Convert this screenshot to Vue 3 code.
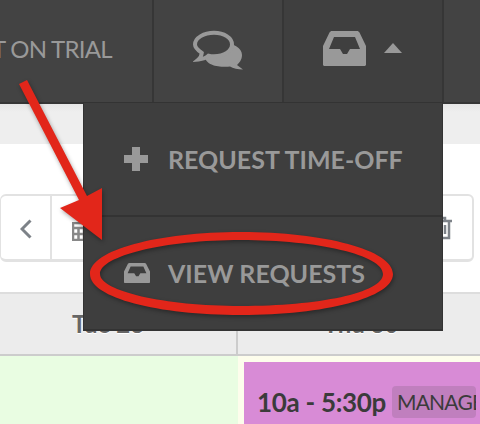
<script setup>
const inboxPath = 'M9 0h25c1 0 2 .6 2.500 1.500L43 15v18.500c0 .8-.7 1.500-1.500 1.500h-40C.7 35 0 34.300 0 33.500V15L6.500 1.500C7 .6 8 0 9 0zM11 6 6 18h11l3 5h4l3-5h10L32 6z'
</script>

<template>
  <div class="page">
    <header class="topbar">
      <div class="cell trial"><span class="trial-label">T ON TRIAL</span></div>
      <div class="cell chat">
        <svg width="52" height="40" viewBox="0 0 52 40">
          <path fill="#999" d="M12 26c0-7 7-13 18-13s19 5 19 12c0 5-3 8-5 10l6 4.500c-5 0-10-1-13-3-8 1-25 0-25-10.500z" />
          <path fill="#434343" stroke="#999" stroke-width="4" d="M21 2.800c10 0 18 5 18 11.700s-8 11.700-18 11.700c-2 0-4-.2-5.500-.6-2.500 2.400-6 3.400-10 3.800 1.800-1.600 3-3.500 3.300-6.500C5 20.300 2 17.500 2 14.500 2 7.800 11 2.800 21 2.800z" />
        </svg>
      </div>
      <div class="cell inbox">
        <svg class="tray" width="43" height="35" viewBox="0 0 43 35">
          <path fill="#999" fill-rule="evenodd" :d="inboxPath" />
        </svg>
        <span class="caret"></span>
      </div>
      <div class="rest"></div>
    </header>

    <div class="strip"></div>

    <section class="toolbar">
      <div class="btn-group">
        <div class="btn back">
          <svg width="12" height="20" viewBox="0 0 12 20"><path fill="none" stroke="#7d8288" stroke-width="3" d="M10.500 1.500 2 10l8.500 8.500" /></svg>
        </div>
        <div class="btn calendar">
          <svg width="18" height="19" viewBox="0 0 18 19">
            <path fill="none" stroke="#888" stroke-width="2.500" d="M1 1h16v17H1zM1 6h16M1 12h16M6.500 6v12M12 6v12" />
          </svg>
        </div>
        <div class="btn trash">
          <svg width="22" height="24" viewBox="0 0 22 24">
            <path fill="none" stroke="#7d8288" stroke-width="2.500" d="M1 5h20M4 5v17h14V5M8 5V2h6v3M8 9v9M14 9v9" />
          </svg>
        </div>
      </div>
    </section>

    <section class="calendar-table">
      <div class="heads">
        <div class="head">Tue 28</div>
        <div class="head">Thu 30</div>
      </div>
      <div class="days">
        <div class="day open"></div>
        <div class="day today">
          <div class="shift">
            <span class="time">10a - 5:30p</span>
            <span class="manage"><span>MANAGE</span></span>
          </div>
        </div>
      </div>
    </section>

    <nav class="dropdown">
      <a class="item">
        <svg class="item-icon" width="24" height="24" viewBox="0 0 24 24"><path fill="#999" d="M8 0h8v8h8v8h-8v8H8v-8H0V8h8z" /></svg>
        <span>REQUEST TIME-OFF</span>
      </a>
      <a class="item">
        <svg class="item-icon" width="26" height="20" viewBox="0 0 43 35" preserveAspectRatio="none">
          <path fill="#999" fill-rule="evenodd" :d="inboxPath" />
        </svg>
        <span>VIEW REQUESTS</span>
      </a>
    </nav>

    <svg class="markup" width="480" height="424" viewBox="0 0 480 424">
      <path fill="#e2261a" d="M19 84 27 80 87 196 102 188V240L60 208 79 200z" />
      <path fill="#e2261a" fill-rule="evenodd" d="M90 274c0-24 68-42 151-42s152 18 152 42-69 41-152 41S90 298 90 274zm10 0c0 17 64 32 141 32s142-13 142-32-65-34-142-34-141 16-141 34z" />
    </svg>
  </div>
</template>

<style scoped>
.page {
  position: relative;
  width: 480px;
  height: 424px;
  overflow: hidden;
  background: #fff;
  font-family: Lato, "Noto Sans", sans-serif;
  color: #3b3b3b;
}

.topbar {
  display: flex;
  height: 104px;
  background: #434343;
  border-bottom: 2px solid #363636;
  box-sizing: border-box;
}
.cell {
  display: flex;
  align-items: center;
  box-sizing: border-box;
  border-right: 2px solid #363636;
  background: #434343;
}
.trial {
  width: 154px;
  justify-content: flex-end;
  padding: 0 40px 6px 0;
  overflow: hidden;
}
.trial-label {
  font-size: 24px;
  letter-spacing: -0.7px;
  color: #999;
  white-space: nowrap;
}
.chat {
  width: 130px;
  padding: 0 0 3px 39px;
}
.inbox {
  width: 160px;
  padding-left: 39px;
  gap: 18px;
  background: #3f3f3f;
}
.tray {
  margin-bottom: 6px;
}
.caret {
  width: 0;
  height: 0;
  margin-bottom: 6px;
  border-left: 9px solid transparent;
  border-right: 9px solid transparent;
  border-bottom: 10px solid #999;
}
.rest {
  flex: 1;
}

.strip {
  height: 40px;
  background: linear-gradient(#e6e6e6, #eeeeee 20%);
}

.toolbar {
  height: 150px;
  padding-top: 50px;
  box-sizing: border-box;
  background: #fff;
  border-bottom: 2px solid #ddd;
}
.btn-group {
  display: flex;
  width: 474px;
  height: 68px;
  box-sizing: border-box;
  border: 2px solid #e2e2e2;
  border-bottom-width: 3px;
  border-left-width: 1px;
  border-radius: 6px;
}
.btn {
  display: flex;
  align-items: center;
  justify-content: center;
}
.back {
  width: 51px;
  border-right: 2px solid #e2e2e2;
  padding-top: 2px;
  box-sizing: border-box;
}
.calendar {
  padding: 8px 0 0 20px;
}
.trash {
  margin-left: auto;
  width: 60px;
}

.heads {
  display: flex;
  height: 60px;
  background: #ececec;
  border-bottom: 2px solid #ccc;
}
.head {
  flex: none;
  display: flex;
  align-items: center;
  justify-content: center;
  width: 238px;
  padding-bottom: 2px;
  font-size: 24px;
  font-weight: 700;
  color: #666;
  text-shadow: 0 1px 0 #fff;
  box-sizing: border-box;
}
.head:first-child {
  padding-right: 20px;
  border-right: 2px solid #ccc;
}
.head:last-child {
  padding-left: 8px;
}
.days {
  display: flex;
  height: 68px;
}
.day {
  box-sizing: border-box;
}
.open {
  width: 238px;
  background: #e9fde2;
}
.today {
  flex: 1;
  padding: 6px 0 0 6px;
  background: #fdfdec;
  min-width: 0;
}
.shift {
  display: flex;
  align-items: flex-start;
  height: 62px;
  padding: 24px 4px 0 13px;
  box-sizing: border-box;
  background: #d88bd6;
  overflow: hidden;
}
.time {
  flex: none;
  width: 135px;
  font-size: 26px;
  line-height: 32px;
  font-weight: 700;
  letter-spacing: -0.3px;
  white-space: nowrap;
}
.manage {
  flex: none;
  width: 84px;
  height: 32px;
  padding-left: 5px;
  box-sizing: border-box;
  background: #c07fbe;
  border-radius: 4px;
  overflow: hidden;
  font-size: 21px;
  line-height: 32px;
  letter-spacing: -0.8px;
  white-space: nowrap;
}

.dropdown {
  position: absolute;
  left: 83px;
  top: 102px;
  width: 360px;
  height: 229px;
  box-sizing: border-box;
  display: flex;
  flex-direction: column;
  background: #3e3e3e;
  border: 1px solid #333;
  border-bottom-width: 2px;
}
.item {
  display: flex;
  align-items: center;
  flex: 1;
  padding-left: 40px;
  font-size: 25px;
  font-weight: 700;
  color: #999;
  white-space: nowrap;
}
.item:first-child {
  border-bottom: 2px solid #333;
}
.item-icon {
  flex: none;
  margin-right: 18px;
}
.item:first-child .item-icon {
  margin-right: 20px;
}

.markup {
  position: absolute;
  left: 0;
  top: 0;
  filter: drop-shadow(1px 2px 2px rgba(0, 0, 0, 0.35));
}
</style>
